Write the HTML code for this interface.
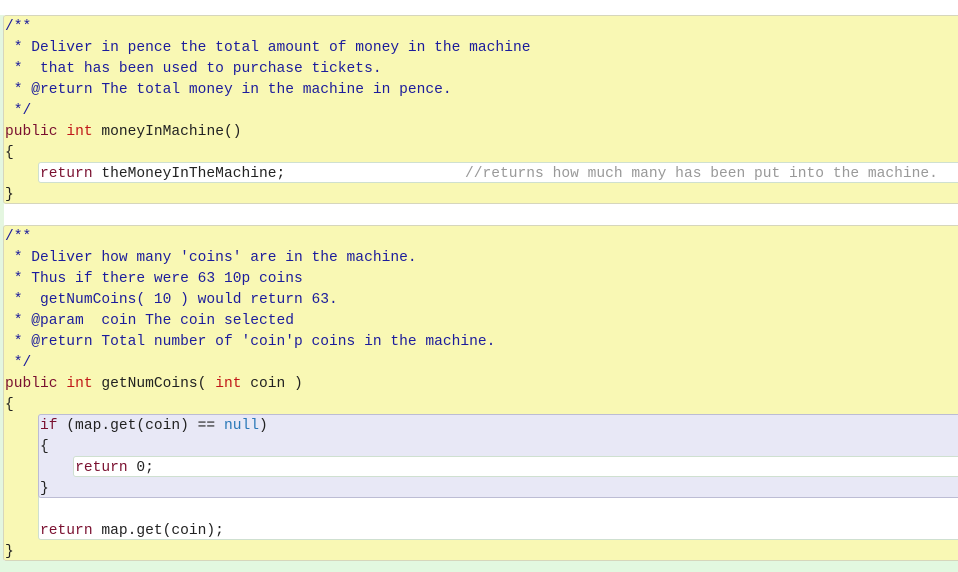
<!DOCTYPE html>
<html><head><style>
body{margin:0;width:958px;height:572px;background:#fff;position:relative;overflow:hidden;font-family:"Liberation Mono",monospace;font-size:14.6px;}
.b{position:absolute;box-sizing:border-box;}
.t{position:absolute;white-space:pre;line-height:21px;height:21px;color:#222;margin-top:1px}
.c{color:#1c1c9c}
.k{color:#7a1030}
.i{color:#c01818}
.n{color:#2a78b8}
.g{color:#999}
</style></head><body>
<div class="b" style="left:0;top:15px;width:4px;height:557px;background:#e4f6e0"></div>
<div class="b" style="left:0;top:561px;width:958px;height:11px;background:#e2f8e0"></div>
<div class="b" style="left:3px;top:15px;width:960px;height:189px;background:#f9f8b4;border:1px solid #d6d6bc;border-radius:3px 0 0 3px"></div>
<div class="b" style="left:38px;top:162px;width:930px;height:21px;background:#fff;border:1px solid #cfe0d0;border-radius:3px"></div>
<div class="b" style="left:3px;top:225px;width:960px;height:336px;background:#f9f8b4;border:1px solid #d6d6bc;border-radius:3px 0 0 3px"></div>
<div class="b" style="left:38px;top:414px;width:930px;height:126px;background:#fff;border:1px solid #cfe0d0;border-radius:3px"></div>
<div class="b" style="left:38px;top:414px;width:930px;height:84px;background:#e8e8f6;border:1px solid #bcbcd4;border-radius:3px"></div>
<div class="b" style="left:73px;top:456px;width:900px;height:21px;background:#fff;border:1px solid #cfe0d0;border-radius:3px"></div>

<div class="t c" style="left:5px;top:16px">/**</div>
<div class="t c" style="left:5px;top:37px"> * Deliver in pence the total amount of money in the machine</div>
<div class="t c" style="left:5px;top:58px"> *  that has been used to purchase tickets.</div>
<div class="t c" style="left:5px;top:79px"> * @return The total money in the machine in pence.</div>
<div class="t c" style="left:5px;top:100px"> */</div>
<div class="t" style="left:5px;top:121px"><span class="k">public</span> <span class="i">int</span> moneyInMachine()</div>
<div class="t" style="left:5px;top:142px">{</div>
<div class="t" style="left:5px;top:163px">    <span class="k">return</span> theMoneyInTheMachine;</div>
<div class="t g" style="left:465px;top:163px">//returns how much many has been put into the machine.</div>
<div class="t" style="left:5px;top:184px">}</div>

<div class="t c" style="left:5px;top:226px">/**</div>
<div class="t c" style="left:5px;top:247px"> * Deliver how many 'coins' are in the machine.</div>
<div class="t c" style="left:5px;top:268px"> * Thus if there were 63 10p coins</div>
<div class="t c" style="left:5px;top:289px"> *  getNumCoins( 10 ) would return 63.</div>
<div class="t c" style="left:5px;top:310px"> * @param  coin The coin selected</div>
<div class="t c" style="left:5px;top:331px"> * @return Total number of 'coin'p coins in the machine.</div>
<div class="t c" style="left:5px;top:352px"> */</div>
<div class="t" style="left:5px;top:373px"><span class="k">public</span> <span class="i">int</span> getNumCoins( <span class="i">int</span> coin )</div>
<div class="t" style="left:5px;top:394px">{</div>
<div class="t" style="left:5px;top:415px">    <span class="k">if</span> (map.get(coin) == <span class="n">null</span>)</div>
<div class="t" style="left:5px;top:436px">    {</div>
<div class="t" style="left:5px;top:457px">        <span class="k">return</span> 0;</div>
<div class="t" style="left:5px;top:478px">    }</div>
<div class="t" style="left:5px;top:520px">    <span class="k">return</span> map.get(coin);</div>
<div class="t" style="left:5px;top:541px">}</div>
</body></html>
